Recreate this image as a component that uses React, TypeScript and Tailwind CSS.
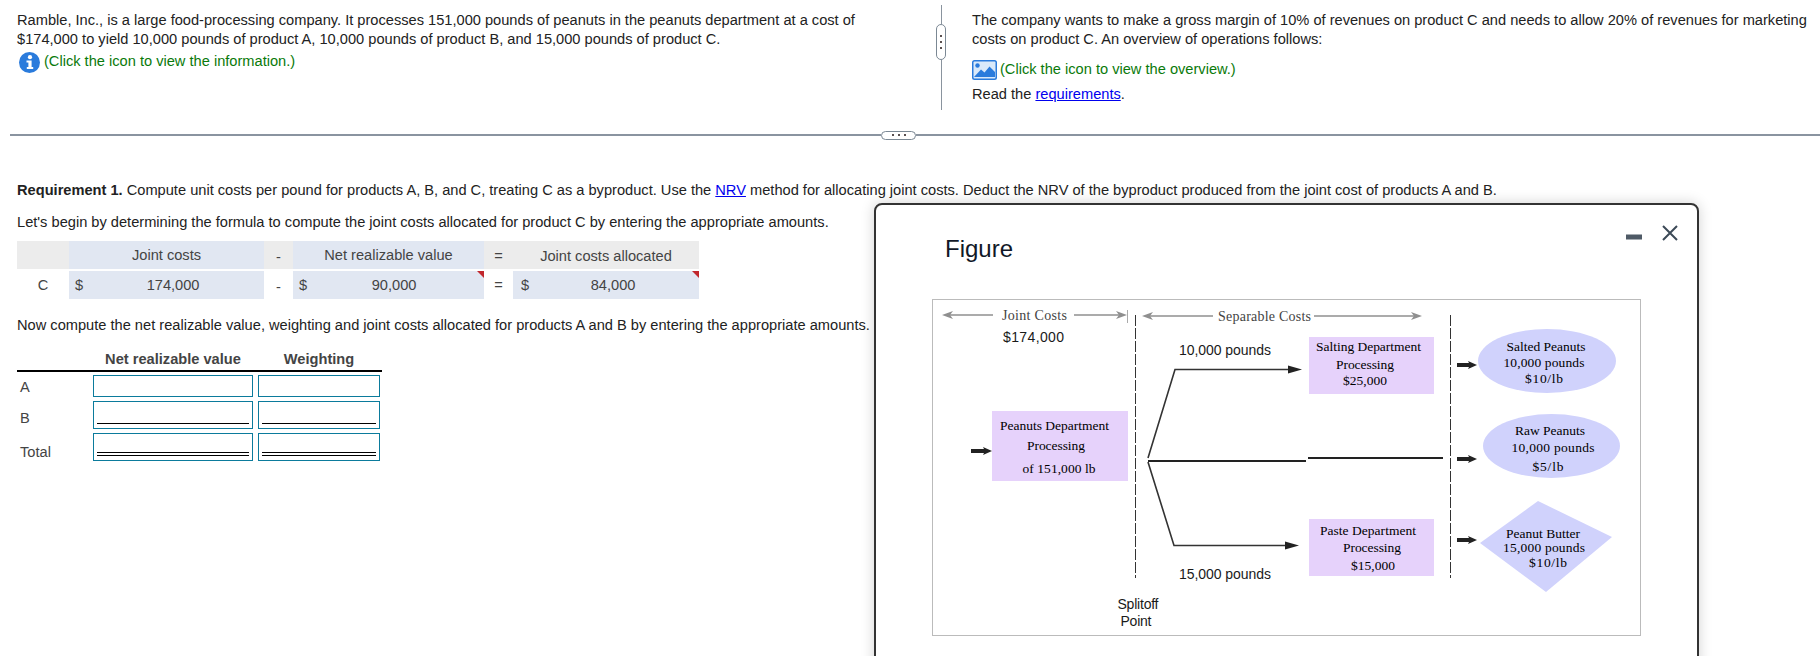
import React from "react";

const SERIF = "'Liberation Serif', serif";
const SANS = "'Liberation Sans', Arial, sans-serif";

function T({ x, y, w, s = 13.5, c = "#000", f = SERIF, children }: { x: number; y: number; w?: number; s?: number; c?: string; f?: string; children: string }) {
  return (
    <text x={x} y={y} fontSize={s} fill={c} fontFamily={f} textAnchor="middle" dominantBaseline="central" {...(w ? { textLength: w, lengthAdjust: "spacing" } : {})}>
      {children}
    </text>
  );
}

function ThickArrow({ x, y, w = 20 }: { x: number; y: number; w?: number }) {
  return <path d={`M${x} ${y - 2}H${x + w - 8}L${x + w - 9} ${y - 4}L${x + w} ${y}L${x + w - 9} ${y + 4}L${x + w - 8} ${y + 2}H${x}Z`} fill="#222" />;
}

function GrayLeft({ x, y }: { x: number; y: number }) {
  return <path d={`M${x} ${y}l11 -4l-3 4l3 4z`} fill="#8f8f8f" />;
}
function GrayRight({ x, y }: { x: number; y: number }) {
  return <path d={`M${x} ${y}l-11 -4l3 4l-3 4z`} fill="#8f8f8f" />;
}

function Diagram() {
  return (
    <svg width="707" height="335" viewBox="933 300 707 335" className="block">
      {/* cost headers */}
      <line x1="946" y1="315" x2="993" y2="315" stroke="#8f8f8f" strokeWidth="1.6" />
      <GrayLeft x={942} y={315} />
      <line x1="1074" y1="315" x2="1122" y2="315" stroke="#8f8f8f" strokeWidth="1.6" />
      <GrayRight x={1127} y={315} />
      <line x1="1127.5" y1="310" x2="1127.5" y2="323" stroke="#aaa" strokeWidth="1" />
      <T x={1034.5} y={315} s={14} w={65} c="#444">Joint Costs</T>
      <line x1="1148" y1="316" x2="1213" y2="316" stroke="#8f8f8f" strokeWidth="1.6" />
      <GrayLeft x={1142} y={316} />
      <T x={1264.5} y={316} s={14} w={93} c="#444">Separable Costs</T>
      <line x1="1314" y1="316" x2="1418" y2="316" stroke="#8f8f8f" strokeWidth="1.6" />
      <GrayRight x={1422} y={316} />

      <line x1="1135.5" y1="315" x2="1135.5" y2="578" stroke="#333" strokeWidth="1" strokeDasharray="11 2" />
      <line x1="1450.5" y1="315" x2="1450.5" y2="578" stroke="#333" strokeWidth="1" strokeDasharray="11 2" />

      <T x={1033.5} y={337} s={14} w={61} f={SANS} c="#1a1a1a">$174,000</T>
      <T x={1225} y={350} s={14} w={92} f={SANS} c="#1a1a1a">10,000 pounds</T>
      <T x={1225} y={574} s={14} w={92} f={SANS} c="#1a1a1a">15,000 pounds</T>
      <T x={1138} y={604} s={14} w={41} f={SANS} c="#1a1a1a">Splitoff</T>
      <T x={1136} y={621} s={14} w={31} f={SANS} c="#1a1a1a">Point</T>

      {/* boxes */}
      <rect x="992" y="411" width="136" height="70" fill="#e6d2fb" />
      <T x={1054.5} y={425} w={109}>Peanuts Department</T>
      <T x={1056} y={445} w={58}>Processing</T>
      <T x={1059} y={468} w={73}>of 151,000 lb</T>
      <ThickArrow x={971} y={451} w={21} />

      <rect x="1309" y="337" width="125" height="57" fill="#e6d2fb" />
      <T x={1368.5} y={346} w={105}>Salting Department</T>
      <T x={1365} y={364} w={58}>Processing</T>
      <T x={1365} y={380} w={44}>$25,000</T>

      <rect x="1309" y="519" width="125" height="57" fill="#e6d2fb" />
      <T x={1368} y={530} w={96}>Paste Department</T>
      <T x={1372} y={547} w={58}>Processing</T>
      <T x={1373} y={565} w={44}>$15,000</T>

      {/* branches */}
      <path d="M1148 458L1175 369.5H1290" fill="none" stroke="#333" strokeWidth="1.6" />
      <path d="M1288 365.5L1302 369.5L1288 373.5Z" fill="#222" />
      <path d="M1148 461H1306" fill="none" stroke="#222" strokeWidth="1.8" />
      <path d="M1308 458H1443" fill="none" stroke="#222" strokeWidth="1.8" />
      <path d="M1148 462L1174 545.5H1288" fill="none" stroke="#333" strokeWidth="1.6" />
      <path d="M1285 541.5L1299 545.5L1285 549.5Z" fill="#222" />

      <ThickArrow x={1457} y={365} />
      <ThickArrow x={1457} y={459} />
      <ThickArrow x={1457} y={540} />

      {/* products */}
      <ellipse cx="1547" cy="361" rx="69" ry="32" fill="#d0d2fc" />
      <T x={1546} y={346} w={79}>Salted Peanuts</T>
      <T x={1544} y={362} w={81}>10,000  pounds</T>
      <T x={1544} y={378} w={38}>$10/lb</T>

      <ellipse cx="1551.5" cy="446" rx="68.5" ry="32" fill="#d0d2fc" />
      <T x={1550} y={430} w={70}>Raw Peanuts</T>
      <T x={1553} y={447} w={83}>10,000  pounds</T>
      <T x={1548} y={466} w={31}>$5/lb</T>

      <polygon points="1538,501 1612,537 1546,592 1480,543" fill="#d0d2fc" />
      <T x={1543} y={533} w={74}>Peanut Butter</T>
      <T x={1544} y={547} w={82}>15,000  pounds</T>
      <T x={1548} y={562} w={38}>$10/lb</T>
    </svg>
  );
}

function InfoIcon() {
  return (
    <svg width="21" height="21" viewBox="0 0 21 21" className="shrink-0">
      <circle cx="10.5" cy="10.5" r="10.5" fill="#2a7bdc" />
      <circle cx="11" cy="5.2" r="2.1" fill="#fff" />
      <path d="M7.5 8.5H12.6V15H14.2V17H7.8V15H9.4V10.5H7.5Z" fill="#fff" />
    </svg>
  );
}

function ImageIcon() {
  return (
    <svg width="25" height="20" viewBox="0 0 25 20" className="shrink-0">
      <rect x="0" y="0" width="25" height="20" rx="2.5" fill="#2a7bdc" />
      <rect x="1.5" y="1.5" width="22" height="17" rx="1" fill="#d9e9fa" />
      <circle cx="5.5" cy="5.5" r="2.2" fill="#2a7bdc" />
      <path d="M2 17L9 9.5L12.5 12.5L17.5 6.5L23 12V17Z" fill="#2a7bdc" />
    </svg>
  );
}

function Dots({ vertical }: { vertical?: boolean }) {
  return (
    <div className={vertical ? "flex flex-col gap-[4px]" : "flex flex-row gap-[4px]"}>
      <span className="block w-[2px] h-[2px] bg-[#5a5050]" />
      <span className="block w-[2px] h-[2px] bg-[#5a5050]" />
      <span className="block w-[2px] h-[2px] bg-[#5a5050]" />
    </div>
  );
}

function Flag() {
  return <span className="absolute top-0 right-0 w-[7px] h-[7px] bg-[#c1272d] [clip-path:polygon(0_0,100%_0,100%_100%)]" />;
}

function Input({ h, rule }: { h: string; rule?: "single" | "double" }) {
  return (
    <div className={`relative border border-[#0b7b9c] bg-white ${h}`}>
      {rule === "single" && <span className="absolute left-[3px] right-[3px] bottom-[4px] h-px bg-black" />}
      {rule === "double" && <span className="absolute left-[3px] right-[3px] bottom-[4px] h-[4px] border-y border-black" />}
    </div>
  );
}

export default function App() {
  return (
    <div className="relative w-[1820px] h-[656px] overflow-hidden bg-white text-[14.63px] leading-[19px] text-[#222] font-['Liberation_Sans',Arial,sans-serif]">
      {/* top */}
      <div className="flex h-[134px]">
        <div className="w-[936px] pl-[17px] pt-[11px] shrink-0">
          <p>
            Ramble, Inc., is a large food-processing company. It processes 151,000 pounds of peanuts in the peanuts department at a cost of
            <br />
            $174,000 to yield 10,000 pounds of product A, 10,000 pounds of product B, and 15,000 pounds of product C.
          </p>
          <div className="mt-[3px] flex items-center gap-[4px] pl-[2px] text-[#0a7a0a]">
            <InfoIcon />
            <span className="-mt-[3px]">(Click the icon to view the information.)</span>
          </div>
        </div>
        <div className="w-[10px] shrink-0 flex flex-col items-center pt-[5px]">
          <div className="w-px h-[19px] bg-[#8a949e]" />
          <div className="w-[10px] h-[36px] shrink-0 rounded-[5px] border-[1.5px] border-[#7b8894] bg-white flex items-center justify-center">
            <Dots vertical />
          </div>
          <div className="w-px h-[50px] bg-[#8a949e]" />
        </div>
        <div className="pl-[26px] pt-[11px] flex-1">
          <p>
            The company wants to make a gross margin of 10% of revenues on product C and needs to allow 20% of revenues for marketing
            <br />
            costs on product C. An overview of operations follows:
          </p>
          <div className="mt-[11px] flex items-center gap-[3px] text-[#0a7a0a]">
            <ImageIcon />
            <span className="-mt-[1px]">(Click the icon to view the overview.)</span>
          </div>
          <p className="mt-[5px]">
            Read the <a className="text-[#0000ee] underline">requirements</a>.
          </p>
        </div>
      </div>

      {/* horizontal divider */}
      <div className="flex items-center h-[2px] pl-[10px]">
        <div className="w-[871px] h-[1.5px] bg-[#8a94a0]" />
        <div className="w-[35px] h-[9px] shrink-0 rounded-[5px] border-[1.5px] border-[#7b8894] bg-white flex items-center justify-center">
          <Dots />
        </div>
        <div className="flex-1 h-[1.5px] bg-[#8a94a0]" />
      </div>

      {/* requirement */}
      <div className="pl-[17px] pt-[45px]">
        <p>
          <b>Requirement 1.</b> Compute unit costs per pound for products A, B, and C, treating C as a byproduct. Use the{" "}
          <a className="text-[#0000ee] underline">NRV</a> method for allocating joint costs. Deduct the NRV of the byproduct produced from the joint cost of products A and B.
        </p>
        <p className="mt-[13px]">Let's begin by determining the formula to compute the joint costs allocated for product C by entering the appropriate amounts.</p>

        <div className="mt-[9px] grid grid-cols-[52px_195px_29px_191px_29px_186px] grid-rows-[28px_28px] gap-y-[2px] w-[682px] text-[#444] text-center">
          <div className="bg-[#ececec]" />
          <div className="bg-[#e1e7f2] flex items-center justify-center pt-[1px]">Joint costs</div>
          <div className="bg-[#ececec] flex items-center justify-center pt-[5px]">-</div>
          <div className="bg-[#e1e7f2] flex items-center justify-center pt-[1px]">Net realizable value</div>
          <div className="bg-[#ececec] flex items-center justify-center pt-[3px]">=</div>
          <div className="bg-[#ececec] flex items-center justify-center pt-[3px]">Joint costs allocated</div>

          <div className="flex items-center justify-center pt-[1px]">C</div>
          <div className="bg-[#e1e7f2] flex items-center pl-[6px] pt-[1px]">
            <span>$</span>
            <span className="flex-1 pr-[1px]">174,000</span>
          </div>
          <div className="flex items-center justify-center pt-[5px]">-</div>
          <div className="relative bg-[#e1e7f2] flex items-center pl-[6px] pt-[1px]">
            <span>$</span>
            <span className="flex-1 pr-[3px]">90,000</span>
            <Flag />
          </div>
          <div className="flex items-center justify-center pt-[1px]">=</div>
          <div className="relative bg-[#e1e7f2] flex items-center pl-[8px] pt-[1px]">
            <span>$</span>
            <span className="flex-1 pr-[2px]">84,000</span>
            <Flag />
          </div>
        </div>

        <p className="mt-[17px]">Now compute the net realizable value, weighting and joint costs allocated for products A and B by entering the appropriate amounts.</p>

        <div className="mt-[15px] w-[365px] text-[#444]">
          <div className="flex h-[20px] border-b-2 border-black box-content font-bold">
            <div className="w-[71px]" />
            <div className="w-[165px] text-center pl-[5px]">Net realizable value</div>
            <div className="w-[5px]" />
            <div className="w-[122px] text-center">Weighting</div>
          </div>
          <div className="mt-[3px] grid grid-cols-[71px_160px_122px] gap-x-[5px] gap-y-[4px]">
            <div className="pl-[3px] flex items-center pt-[2px]">A</div>
            <Input h="h-[22px]" />
            <Input h="h-[22px]" />
            <div className="pl-[3px] flex items-center pt-[7px]">B</div>
            <Input h="h-[28px]" rule="single" />
            <Input h="h-[28px]" rule="single" />
            <div className="pl-[3px] flex items-center pt-[10px]">Total</div>
            <Input h="h-[28px]" rule="double" />
            <Input h="h-[28px]" rule="double" />
          </div>
        </div>
      </div>

      {/* modal */}
      <div className="absolute left-[874px] top-[203px] w-[825px] h-[500px] rounded-[8px] border-2 border-[#333] bg-white shadow-[0_0_14px_rgba(0,0,0,0.18)] pl-[56px]">
        <div className="flex h-[94px] justify-between pr-[19px] pt-[18px]">
          <h2 className="pl-[13px] pt-[12px] text-[24px] leading-[28px] text-[#111827]">Figure</h2>
          <div className="flex items-start gap-[20px] pr-0">
            <svg width="16" height="6" viewBox="0 0 16 6" className="mt-[11px]">
              <rect width="16" height="5" y="0.5" fill="#4f5a66" />
            </svg>
            <svg width="16" height="16" viewBox="0 0 16 16" className="mt-[2px]">
              <path d="M1 1L15 15M15 1L1 15" stroke="#3c4a57" strokeWidth="2" fill="none" />
            </svg>
          </div>
        </div>
        <div className="w-[709px] border border-[#bbb]">
          <Diagram />
        </div>
      </div>
    </div>
  );
}
